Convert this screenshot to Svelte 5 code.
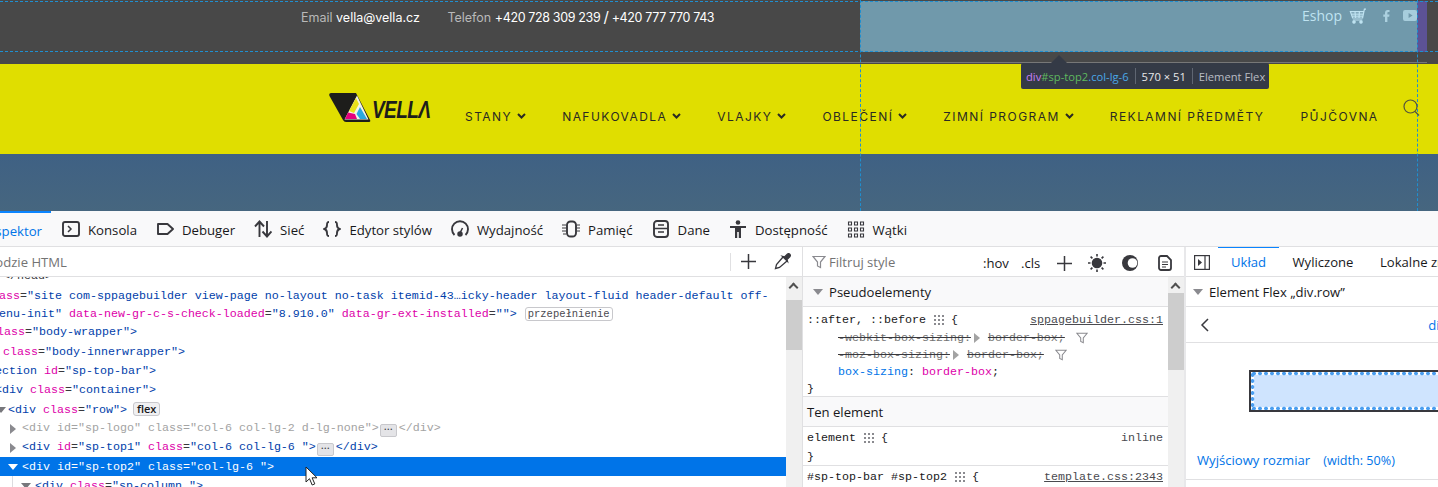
<script>
	const nav = [
		{ label: 'STANY', sub: true },
		{ label: 'NAFUKOVADLA', sub: true },
		{ label: 'VLAJKY', sub: true },
		{ label: 'OBLEČENÍ', sub: true },
		{ label: 'ZIMNÍ PROGRAM', sub: true },
		{ label: 'REKLAMNÍ PŘEDMĚTY', sub: false },
		{ label: 'PŮJČOVNA', sub: false }
	];

	const attr = (name, value) => [
		['n', ' ' + name],
		['p', '='],
		['v', '"' + value + '"']
	];
	const open = (tag, ...attrs) => [['v', '<' + tag], ...attrs.flat(), ['v', '>']];

	// x is where the line starts once the panel has been scrolled sideways
	const markup = [
		{ x: 3, parts: [['p', '</head>']], h: 9 },
		{
			x: -15,
			parts: [
				['n', 'class'],
				['p', '='],
				['v', '"site com-sppagebuilder view-page no-layout no-task itemid-43…icky-header layout-fluid header-default off-']
			],
			h: 19
		},
		{
			x: -1,
			parts: [
				['v', 'enu-init"'],
				['n', ' data-new-gr-c-s-check-loaded'],
				['p', '='],
				['v', '"8.910.0"'],
				['n', ' data-gr-ext-installed'],
				['p', '='],
				['v', '"">']
			],
			h: 17,
			badge: 'przepełnienie'
		},
		{ x: -45, parts: open('div', attr('class', 'body-wrapper')), h: 20 },
		{ x: -32, parts: open('div', attr('class', 'body-innerwrapper')), h: 19 },
		{ x: -19, parts: open('section', attr('id', 'sp-top-bar')), h: 19 },
		{ x: -5, parts: open('div', attr('class', 'container')), h: 20 },
		{ x: 8, parts: open('div', attr('class', 'row')), h: 19, twisty: 'down', tx: -4, badge: 'flex', chip: true },
		{
			x: 22,
			parts: open('div', attr('id', 'sp-logo'), attr('class', 'col-6 col-lg-2 d-lg-none')),
			h: 19,
			twisty: 'right',
			tx: 10,
			dots: true,
			close: true,
			dim: true
		},
		{ x: 22, parts: open('div', attr('id', 'sp-top1'), attr('class', 'col-6 col-lg-6 ')), h: 19, twisty: 'right', tx: 10, dots: true, close: true },
		{ x: 22, parts: open('div', attr('id', 'sp-top2'), attr('class', 'col-lg-6 ')), h: 19, twisty: 'down', tx: 8, selected: true },
		{ x: 35, parts: open('div', attr('class', 'sp-column ')), h: 19, twisty: 'down', tx: 21 }
	];

	const tabs = ['Konsola', 'Debuger', 'Sieć', 'Edytor stylów', 'Wydajność', 'Pamięć', 'Dane', 'Dostępność', 'Wątki'];
</script>

<div class="page">
	<div class="topbar">
		<div class="contact">
			<span class="muted">Email</span> vella@vella.cz
			<span class="muted phone">Telefon</span> <span class="numbers">+420 728 309 239 <span class="slash">/</span> +420 777 770 743</span>
		</div>
		<div class="shop">
			<span>Eshop</span>
			<svg width="18" height="16" viewBox="0 0 18 16" fill="none" stroke="currentColor" stroke-width="1.2">
				<path d="M17 1.2h-1.6L13.6 10H3.6L1.4 3.6h13.2M2.2 6.2h12M3 8.2h11M6 3.6 6.6 10M10.4 3.6 10 10M3.8 12h9.6" />
				<circle cx="5" cy="14" r="1.2" fill="currentColor" />
				<circle cx="12" cy="14" r="1.2" fill="currentColor" />
			</svg>
			<svg class="fb" width="7" height="12" viewBox="0 0 7 12"><path fill="currentColor" d="M2 12V6.7H.3V4.600h1.700V3c0-1.900 1-3 2.800-3h1.700v2.100H5.500c-.9 0-1.100.4-1.100 1.100v1.400h2.100l-.3 2.100H4.400V12z" /></svg>
			<svg width="14" height="11" viewBox="0 0 14 11"><path fill="currentColor" fill-rule="evenodd" d="M2 0h10a2 2 0 0 1 2 2v7a2 2 0 0 1-2 2H2a2 2 0 0 1-2-2V2a2 2 0 0 1 2-2zm3.600 3v5l4-2.500z" /></svg>
		</div>
		<div class="rule"></div>
	</div>

	<header class="header">
		<div class="logo">
			<svg width="43" height="29" viewBox="0 0 43 29">
				<path fill="#1d1d1b" d="M2 0H27L41 27Q42 29 40 29H17Q15 29 14 27L.5 3Q-.5 0 2 0z" />
				<path fill="#f4f4e8" d="M28 2.500L39.500 26.500H15.500z" />
				<path fill="#e9e21b" d="M27 5L20 18 25 20 30 11z" />
				<path fill="#e5007e" d="M19 19.500L26 21 28 26H16z" />
				<path fill="#29a8e0" d="M31 14L38 26H31L27.500 21z" />
			</svg>
			<span class="wordmark">VELLΛ</span>
		</div>
		<nav class="nav">
			{#each nav as item}
				<span class="nav-item">
					{item.label}
					{#if item.sub}
						<svg width="9" height="6" viewBox="0 0 9 6" fill="none" stroke="#2a2a22" stroke-width="2"><path d="M1 1l3.500 3.500L8 1" /></svg>
					{/if}
				</span>
			{/each}
		</nav>
	</header>

	<div class="hero"></div>

	<section class="devtools">
		<div class="tabs">
			<div class="tab active">Inspektor</div>
			{#each tabs as tab, i}
				<div class="tab">
					<svg width="18" height="18" viewBox="0 0 18 18" fill="none" stroke="#38383d" stroke-width="1.900">
						{#if i === 0}
							<rect x="1" y="2" width="16" height="14" rx="2" /><path d="M6 6l3 3-3 3" stroke-width="1.500" />
						{:else if i === 1}
							<path d="M2 4h9.500L17 9l-5.500 5H2z" stroke-linejoin="round" />
						{:else if i === 2}
							<path d="M5.500 17V2M1 6.500l4.500-5 4.500 5M13 1v15M8.500 11.500l4.500 5 4.500-5" />
						{:else if i === 3}
							<path d="M6 2C4 2 4 3 4 5s0 3-2.500 4C4 10 4 11 4 13s0 3 2 3M12 2c2 0 2 1 2 3s0 3 2.500 4C14 10 14 11 14 13s0 3-2 3" />
						{:else if i === 4}
							<path d="M3.500 15A8 8 0 1 1 14.500 15" /><path d="M11.500 8L9 13" stroke-width="1.500" /><circle cx="9" cy="14" r="1.800" fill="#38383d" />
						{:else if i === 5}
							<rect x="5" y="1.500" width="9" height="15" rx="3.500" /><path d="M0 5h4M0 8h4M0 11h4M1 14h3M15 5h3M15 8h3M15 11h3" stroke-width="1" />
						{:else if i === 6}
							<rect x="2" y="1" width="14" height="16" rx="3" /><path d="M2 8.500h14M6 5h6M6 12h6" stroke-width="1.500" />
						{:else if i === 7}
							<circle cx="9" cy="2.500" r="2.300" fill="#38383d" stroke="none" /><path fill="#38383d" stroke="none" d="M1 6h16v2h-5v10H9.800v-6H8.200v6H6V8H1z" />
						{:else}
							<path stroke-width="1.100" d="M1.500 2h3v3h-3zM7.500 2h3v3h-3zM13.500 2h3v3h-3zM1.500 8h3v3h-3zM7.500 8h3v3h-3zM13.500 8h3v3h-3zM1.500 14h3v3h-3zM7.500 14h3v3h-3zM13.500 14h3v3h-3z" />
						{/if}
					</svg>
					{tab}
				</div>
			{/each}
		</div>

		<div class="panels">
			<div class="panel markup-panel">
				<div class="toolbar">
					<span class="search">Wyszukaj w kodzie HTML</span>
					<span class="tool-sep"></span>
					<svg class="plus" width="15" height="15" viewBox="0 0 15 15"><path d="M7.500 0v15M0 7.500h15" stroke="#38383d" stroke-width="1.500" /></svg>
					<svg class="picker" width="17" height="17" viewBox="0 0 17 17" fill="none" stroke="#38383d" stroke-width="1.300">
						<path d="M9 4L2.500 11.500 1.500 15.500 5.500 14.500 13 8" />
						<path fill="#38383d" d="M8.500 3.500l2 .5 3-3a1.800 1.800 0 0 1 2.500 2.500l-3 3 .5 2z" />
					</svg>
				</div>
				<div class="markup-body">
					<div class="tree">
						{#each markup as row}
							<div class="row" class:selected={row.selected} class:dim={row.dim} style="height:{row.h}px">
								{#if row.twisty}
									<span class="twisty {row.twisty}" style="left:{row.tx}px"></span>
								{/if}
								<span class="line" style="left:{row.x}px">{#each row.parts as [kind, text]}<span class={kind}>{text}</span>{/each}{#if row.badge}<span class="badge" class:chip={row.chip}>{row.badge}</span>{/if}{#if row.dots}<span class="dots">•••</span>{/if}{#if row.close}<span class="v">&lt;/div&gt;</span>{/if}</span>
							</div>
						{/each}
						<span class="tree-guide"></span>
					</div>
					<div class="scrollbar">
						<span class="arrow"></span>
						<span class="thumb"></span>
					</div>
				</div>
			</div>

			<div class="panel rules-panel">
				<div class="toolbar">
					<svg class="filter" width="14" height="14" viewBox="0 0 14 14" fill="#fff" stroke="#8a8a8f" stroke-width="1.200"><path d="M1 1.500h12L8.500 7v5.500l-3-1.500V7z" /></svg>
					<span class="search">Filtruj style</span>
					<span class="tools">
						<span class="hov">:hov</span>
						<span class="cls">.cls</span>
						<svg width="15" height="15" viewBox="0 0 15 15"><path d="M7.500 0v15M0 7.500h15" stroke="#38383d" stroke-width="1.500" /></svg>
						<svg width="18" height="18" viewBox="0 0 18 18" stroke="#38383d" stroke-width="1.600"><circle cx="9" cy="9" r="4.500" fill="#38383d" /><path d="M9 0v2.500M9 15.500V18M0 9h2.500M15.500 9H18M2.600 2.600l1.800 1.800M13.600 13.600l1.800 1.800M2.600 15.400l1.800-1.800M13.600 4.400l1.800-1.800" /></svg>
						<svg width="16" height="16" viewBox="0 0 16 16"><circle cx="8" cy="8" r="8" fill="#38383d" /><circle cx="10.500" cy="8" r="4.800" fill="#fff" /></svg>
						<svg width="14" height="16" viewBox="0 0 14 16" fill="none" stroke="#38383d" stroke-width="1.800"><path d="M3 1h6l4 4v8a2 2 0 0 1-2 2H3a2 2 0 0 1-2-2V3a2 2 0 0 1 2-2z" /><path d="M4 7h6M4 9.500h6M4 12h4" stroke-width="1.100" /></svg>
					</span>
				</div>
				<div class="rules-body">
					<div class="rules">
						<div class="heading tall"><span class="caret"></span>Pseudoelementy</div>
						<div class="rule-block first">
							<div class="code sel-line"><span>::after, ::before <i class="grid-ico"></i> {'{'}</span><span class="src">sppagebuilder.css:1</span></div>
							<div class="code decl off"><s>-webkit-box-sizing:</s><b class="tri"></b><s>border-box;</s><svg class="funnel" width="12" height="14" viewBox="0 0 14 14" fill="#fff" stroke="#8a8a8f" stroke-width="1.200"><path d="M1 1.500h12L8.500 7v5.500l-3-1.500V7z" /></svg></div>
							<div class="code decl off"><s>-moz-box-sizing:</s><b class="tri"></b><s>border-box;</s><svg class="funnel" width="12" height="14" viewBox="0 0 14 14" fill="#fff" stroke="#8a8a8f" stroke-width="1.200"><path d="M1 1.500h12L8.500 7v5.500l-3-1.500V7z" /></svg></div>
							<div class="code decl"><span class="prop">box-sizing</span>: <span class="val">border-box</span>;</div>
							<div class="code">{'}'}</div>
						</div>
						<div class="heading">Ten element</div>
						<div class="rule-block second">
							<div class="code sel-line"><span>element <i class="grid-ico"></i> {'{'}</span><span class="plain">inline</span></div>
							<div class="code">{'}'}</div>
						</div>
						<div class="rule-block third">
							<div class="code sel-line"><span>#sp-top-bar #sp-top2 <i class="grid-ico"></i> {'{'}</span><span class="src">template.css:2343</span></div>
						</div>
					</div>
					<div class="scrollbar rules-bar">
						<span class="arrow"></span>
						<span class="thumb"></span>
					</div>
				</div>
			</div>

			<div class="panel layout-panel">
				<div class="toolbar side-tabs">
					<svg class="side-toggle" width="16" height="15" viewBox="0 0 16 15" fill="none" stroke="#38383d" stroke-width="1.200"><rect x=".6" y=".6" width="14.800" height="13.800" /><path d="M11 1v13" /><path fill="#38383d" stroke="none" d="M4 4l4 3.500-4 3.500z" /></svg>
					<span class="side-tab current">Układ</span>
					<span class="side-tab">Wyliczone</span>
					<span class="side-tab">Lokalne zmiany</span>
				</div>
				<div class="heading tall flush"><span class="caret"></span>Element Flex „div.row”</div>
				<div class="crumb">
					<svg width="9" height="14" viewBox="0 0 9 14" fill="none" stroke="#38383d" stroke-width="1.500"><path d="M8 1L2 7l6 6" /></svg>
					<span class="crumb-link">div#sp-top2</span>
				</div>
				<div class="flex-preview"><div class="flex-box"><div class="flex-item"></div></div></div>
				<div class="size-row"><span>Wyjściowy rozmiar</span><span class="reason">(width: 50%)</span></div>
			</div>
		</div>
	</section>

	<!-- page inspector highlight, sits on top of the site -->
	<div class="hl-box"></div>
	<div class="hl-strip"></div>
	<div class="guide h g1"></div>
	<div class="guide h g2"></div>
	<div class="guide v g3"></div>
	<div class="guide v g4"></div>
	<svg class="search-ico" width="17" height="18" viewBox="0 0 17 18" fill="none" stroke="#55553a" stroke-width="1.200"><circle cx="7.500" cy="7.500" r="6.500" /><path d="M12 12.500l4 4" /></svg>
	<div class="tip">
		<span class="tip-arrow"></span>
		<span><span class="t-tag">div</span><span class="t-id">#sp-top2</span><span class="t-cls">.col-lg-6</span></span>
		<span class="tip-sep"></span>
		<span class="t-size">570 × 51</span>
		<span class="tip-sep"></span>
		<span class="t-kind">Element Flex</span>
	</div>
	<svg class="cursor" width="14" height="21" viewBox="0 0 14 21"><path d="M1 1v15l3.500-3.300 2.700 6.300 2.600-1.100-2.700-6.100H12z" fill="#fff" stroke="#222" stroke-width="1" /></svg>
</div>

<style>
	:global(body) {
		margin: 0;
		overflow: hidden;
		background: #fff;
	}

	.page {
		position: relative;
		width: 1438px;
		height: 487px;
		overflow: hidden;
		font-family: 'Open Sans', 'Noto Sans', sans-serif;
		color: #18181a;
	}

	/* site */
	.topbar {
		position: relative;
		display: flex;
		justify-content: space-between;
		height: 64px;
		box-sizing: border-box;
		padding: 8px 21px 0 301px;
		background: #484848;
	}

	.contact {
		font-family: Inter, 'Open Sans', sans-serif;
		font-size: 12.5px;
		line-height: 18px;
		color: #fff;
		white-space: pre-wrap;
	}

	.muted {
		color: #b9b9b9;
	}

	.phone {
		margin-left: 24px;
	}

	.numbers {
		letter-spacing: -0.36px;
	}

	.slash {
		font-size: 15px;
	}

	.shop {
		position: relative;
		z-index: 2;
		display: flex;
		align-items: center;
		gap: 7px;
		height: 15px;
		font-size: 14px;
		color: #bfe3f1;
	}

	.shop .fb {
		margin: 0 6px 0 9px;
		opacity: 0.75;
	}

	.shop svg:last-child {
		opacity: 0.7;
	}

	.rule {
		position: absolute;
		left: 290px;
		right: 11px;
		bottom: 1px;
		height: 1px;
		background: #777;
	}

	.header {
		display: flex;
		align-items: center;
		height: 90px;
		box-sizing: border-box;
		padding-left: 329px;
		background: #e0de00;
	}

	.logo {
		display: flex;
		align-items: flex-end;
		flex: none;
		width: 136px;
		height: 29px;
		margin-top: -4px;
	}

	.wordmark {
		margin: 0 0 3px 0;
		font-family: 'Liberation Sans', sans-serif;
		font-size: 19px;
		font-style: italic;
		font-weight: 700;
		line-height: 15px;
		letter-spacing: -0.6px;
		color: #1d1d1b;
		transform: scaleY(1.3);
		transform-origin: left bottom;
	}

	.nav {
		display: flex;
		gap: 36px;
		margin-top: 14px;
		font-family: Inter, 'Open Sans', sans-serif;
		font-size: 12px;
		letter-spacing: 1.45px;
		color: #2a2a22;
	}

	.nav-item {
		display: flex;
		align-items: center;
		gap: 5px;
		white-space: nowrap;
	}

	.hero {
		height: 57px;
		background: linear-gradient(180deg, #3f6184, #46667f);
	}

	/* devtools */
	.devtools {
		font-size: 13.1px;
	}

	.tabs {
		position: relative;
		display: flex;
		align-items: center;
		gap: 19px;
		height: 36px;
		box-sizing: border-box;
		padding: 3px 0 0 62px;
		font-size: 13.2px;
		background: #f9f9fa;
		border-bottom: 1px solid #e0e0e2;
	}

	.tab {
		display: flex;
		align-items: center;
		gap: 8px;
		white-space: nowrap;
		color: #18181a;
	}

	.tab svg {
		flex: none;
		margin-top: -2px;
	}

	.tab.active {
		position: absolute;
		left: -16px;
		top: 0;
		width: 67px;
		height: 35px;
		padding: 3px 9px 0 0;
		justify-content: flex-end;
		color: #0074e8;
		border-top: 2px solid #0a84ff;
		box-sizing: border-box;
	}

	.panels {
		display: grid;
		grid-template-columns: 803px 383px 1fr;
		height: 240px;
	}

	.panel {
		min-width: 0;
		overflow: hidden;
		border-right: 1px solid #e0e0e2;
	}

	.rules-panel {
		border-right: 2px solid #e8e8ea;
	}

	.layout-panel {
		border-right: 0;
	}

	.toolbar {
		position: relative;
		display: flex;
		align-items: center;
		height: 30px;
		box-sizing: border-box;
		padding-top: 1px;
		border-bottom: 1px solid #e0e0e2;
		white-space: nowrap;
	}

	.toolbar > * {
		flex: none;
	}

	.search {
		color: #737373;
	}

	.markup-panel .search {
		margin-left: -85px;
	}

	.tool-sep {
		position: absolute;
		left: 730px;
		top: 6px;
		width: 1px;
		height: 18px;
		background: #e0e0e2;
	}

	.plus {
		position: absolute;
		left: 741px;
		top: 7px;
	}

	.picker {
		position: absolute;
		left: 774px;
		top: 6px;
	}

	.markup-body,
	.rules-body {
		display: flex;
		height: 210px;
	}

	.tree {
		position: relative;
		flex: 1;
		min-width: 0;
		overflow: hidden;
		font-family: 'Liberation Mono', 'DejaVu Sans Mono', monospace;
		font-size: 11.67px;
	}

	.row {
		position: relative;
		display: flex;
		align-items: center;
		white-space: pre;
	}

	.row:first-child .line {
		bottom: 3px;
	}

	.line {
		position: absolute;
	}

	.row.selected {
		background: #0074e8;
		width: 786px;
		height: 19px;
	}

	.n {
		color: #dd00a9;
	}

	.v {
		color: #003eaa;
	}

	.p {
		color: #38383d;
	}

	.dim .n,
	.dim .v,
	.dim .p {
		color: #a3a3a3;
	}

	.selected .n,
	.selected .v,
	.selected .p {
		color: #fff;
	}

	.badge {
		display: inline-block;
		margin-left: 8px;
		padding: 0 2px;
		line-height: 12px;
		border: 1px solid #c8c8cc;
		border-radius: 3px;
		font-size: 10.5px;
		color: #4a4a4f;
	}

	.badge.chip {
		margin-left: 6px;
		padding: 0 3px;
		background: #f0f0f2;
		color: #18181a;
		font-family: 'Open Sans', sans-serif;
		font-size: 11px;
		font-weight: 600;
	}

	.dots {
		display: inline-block;
		width: 15px;
		height: 11px;
		line-height: 11px;
		margin: 0 2px 0 1px;
		text-align: center;
		font-size: 5px;
		color: #38383d;
		background: #e4e4e7;
		border: 1px solid #c8c8cc;
		border-radius: 2px;
	}

	.twisty {
		position: absolute;
		width: 0;
		height: 0;
	}

	.twisty.right {
		border-left: 6px solid #8a8a8f;
		border-top: 5px solid transparent;
		border-bottom: 5px solid transparent;
	}

	.twisty.down {
		border-top: 6px solid #77777c;
		border-left: 5px solid transparent;
		border-right: 5px solid transparent;
	}

	.selected .twisty.down {
		border-top-color: #fff;
	}

	.tree-guide {
		position: absolute;
		left: 12px;
		top: 199px;
		width: 1px;
		height: 12px;
		background: #dcdcdf;
	}

	.scrollbar {
		position: relative;
		flex: none;
		width: 16px;
		background: #f0f0f0;
	}

	.arrow {
		position: absolute;
		left: 4px;
		top: 7px;
		width: 5px;
		height: 5px;
		border-left: 2px solid #505050;
		border-top: 2px solid #505050;
		transform: rotate(45deg);
	}

	.thumb {
		position: absolute;
		left: 0;
		top: 23px;
		width: 16px;
		height: 50px;
		background: #cdcdcd;
	}

	.rules-bar .thumb {
		top: 16px;
		height: 77px;
	}

	.rules-panel .toolbar {
		padding-left: 9px;
	}

	.filter {
		margin-right: 3px;
	}

	.tools {
		position: absolute;
		left: 180px;
		top: 7px;
		display: flex;
		align-items: center;
		height: 18px;
	}

	.hov {
		width: 38px;
	}

	.cls {
		width: 35px;
		margin-right: 1px;
	}

	.tools svg:nth-of-type(2) {
		margin-left: 16px;
	}

	.tools svg:nth-of-type(3) {
		margin-left: 16px;
	}

	.tools svg:nth-of-type(4) {
		margin-left: 20px;
	}

	.rules {
		flex: 1;
		min-width: 0;
		overflow: hidden;
	}

	.heading {
		height: 31px;
		line-height: 31px;
		box-sizing: border-box;
		padding-left: 4px;
		background: #f9f9fa;
		border-top: 1px solid #e0e0e2;
		border-bottom: 1px solid #e0e0e2;
		white-space: nowrap;
	}

	.heading.tall {
		display: flex;
		align-items: center;
		height: 30px;
		border-top: 0;
		padding: 1px 0 0 10px;
		line-height: 28px;
	}

	.heading.flush {
		background: #fff;
		padding-left: 7px;
	}

	.caret {
		width: 0;
		height: 0;
		margin-right: 6px;
		border-top: 6px solid #8a8a8f;
		border-left: 5px solid transparent;
		border-right: 5px solid transparent;
	}

	.code {
		display: flex;
		align-items: center;
		height: 17px;
		padding: 0 5px 0 4px;
		font-family: 'Liberation Mono', 'DejaVu Sans Mono', monospace;
		font-size: 11.67px;
		white-space: pre;
	}

	.sel-line {
		justify-content: space-between;
	}

	.rule-block.first {
		padding: 3px 0 0;
		height: 89px;
		box-sizing: border-box;
	}

	.rule-block.first .sel-line {
		height: 19px;
	}

	.rule-block.second {
		height: 38px;
		padding-top: 1px;
		box-sizing: border-box;
	}

	.rule-block.second .sel-line {
		height: 20px;
	}

	.rule-block.third {
		border-top: 1px solid #e0e0e2;
		padding-top: 2px;
	}

	.src {
		text-decoration: underline;
		color: #4a4a4f;
	}

	.plain {
		color: #4a4a4f;
	}

	.grid-ico {
		display: inline-block;
		width: 11px;
		height: 11px;
		vertical-align: -2px;
		background-image: radial-gradient(#8a8a8f 1px, transparent 1.300px);
		background-size: 4px 4px;
	}

	.decl {
		padding-left: 35px;
	}

	.off {
		color: #737373;
	}

	.off s {
		text-decoration-color: #38383d;
	}

	.tri {
		width: 0;
		height: 0;
		margin: 0 8px 0 3px;
		border-left: 6px solid #a3a3a3;
		border-top: 5px solid transparent;
		border-bottom: 5px solid transparent;
	}

	.funnel {
		margin-left: 11px;
	}

	.prop {
		color: #0074e8;
	}

	.val {
		color: #dd00a9;
	}

	.side-tabs {
		gap: 26.5px;
		padding-left: 8px;
	}

	.side-toggle {
		margin-right: -5.5px;
	}

	.side-tab {
		position: relative;
	}

	.side-tab.current {
		color: #0074e8;
	}

	.side-tab.current::before {
		content: '';
		position: absolute;
		left: -13px;
		right: -13px;
		top: -7px;
		height: 2px;
		background: #0a84ff;
	}

	.crumb {
		display: flex;
		align-items: center;
		justify-content: space-between;
		height: 36px;
		box-sizing: border-box;
		padding-left: 14px;
		border-bottom: 1px solid #e0e0e2;
	}

	.crumb-link {
		margin-right: -63px;
		color: #0074e8;
	}

	.flex-preview {
		height: 100px;
		box-sizing: border-box;
		padding: 27px 0 0 63px;
	}

	.flex-box {
		width: 300px;
		height: 42px;
		box-sizing: border-box;
		border: 2px solid #38383d;
	}

	.flex-item {
		height: 100%;
		background:
			radial-gradient(circle, #4a9ef0 1.500px, transparent 2.200px) 0 -1px / 6px 5px repeat-x,
			radial-gradient(circle, #4a9ef0 1.500px, transparent 2.200px) 0 calc(100% + 1px) / 6px 5px repeat-x,
			radial-gradient(circle, #4a9ef0 1.500px, transparent 2.200px) -1px 0 / 5px 6px repeat-y,
			linear-gradient(#cfe4fe, #cfe4fe) 3px 3px / 100% calc(100% - 6px) no-repeat,
			#fff;
	}

	.size-row {
		display: flex;
		align-items: center;
		gap: 13px;
		height: 37px;
		box-sizing: border-box;
		padding: 0 0 2px 11px;
		color: #0074e8;
		border-bottom: 1px solid #e0e0e2;
	}

	.reason {
		font-size: 12.6px;
	}

	/* highlighter overlay */
	.hl-box {
		position: absolute;
		left: 860px;
		top: 1px;
		width: 557px;
		height: 51px;
		background: #7099ab;
	}

	.hl-strip {
		position: absolute;
		left: 1417px;
		top: 1px;
		width: 10px;
		height: 51px;
		background: #5c5295;
	}

	.guide {
		position: absolute;
	}

	.guide.h {
		left: 0;
		width: 1438px;
		border-top: 1px dashed #1f8fd0;
	}

	.guide.v {
		top: 0;
		height: 211px;
		border-left: 1px dashed #1f8fd0;
	}

	.g1 {
		top: 1px;
	}

	.g2 {
		top: 51px;
	}

	.g3 {
		left: 860px;
	}

	.g4 {
		left: 1417px;
	}

	.search-ico {
		position: absolute;
		left: 1403px;
		top: 99px;
	}

	.tip {
		position: absolute;
		left: 1021px;
		top: 63px;
		display: flex;
		align-items: center;
		gap: 6px;
		width: 248px;
		height: 26px;
		box-sizing: border-box;
		padding-left: 5px;
		background: #343a46;
		border-radius: 2px;
		font-size: 11.2px;
		white-space: nowrap;
	}

	.tip-arrow {
		position: absolute;
		left: 30px;
		top: -8px;
		border-left: 8px solid transparent;
		border-right: 8px solid transparent;
		border-bottom: 8px solid #343a46;
	}

	.tip-sep {
		width: 1px;
		height: 16px;
		background: #5f6672;
	}

	.t-tag {
		color: #c77ff5;
	}

	.t-id {
		color: #5fb85f;
	}

	.t-cls {
		color: #4aa8e8;
	}

	.t-size {
		color: #e8e8ea;
	}

	.t-kind {
		color: #b8bcc4;
	}

	.cursor {
		position: absolute;
		left: 305px;
		top: 466px;
	}
</style>
